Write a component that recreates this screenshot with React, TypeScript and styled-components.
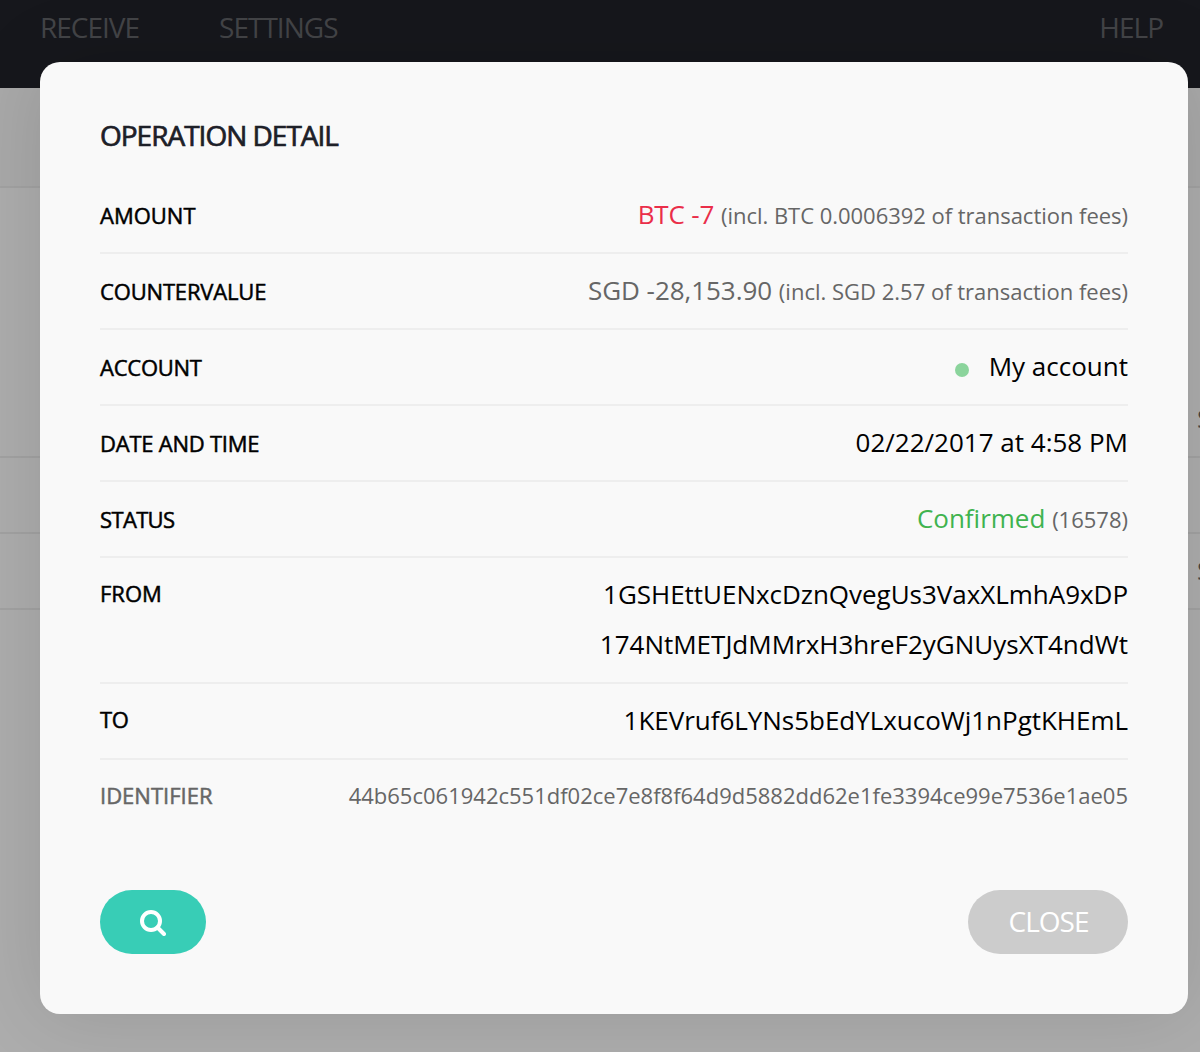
import React from 'react';
import styled, { createGlobalStyle } from 'styled-components';

const GlobalStyle = createGlobalStyle`
  *, *::before, *::after { box-sizing: border-box; }
  html, body, #root { height: 100%; margin: 0; }
  body {
    overflow: hidden;
    font-family: 'Open Sans', 'Noto Sans', sans-serif;
    background: #adadad;
  }
`;

const Page = styled.div`
  position: relative;
  height: 1052px;
  overflow: hidden;
  background: #adadad;
`;

const TopBar = styled.header`
  display: flex;
  height: 88px;
  padding: 8px 37px 0 40px;
  background: #16171c;
`;

const NavItem = styled.span<{ $end?: boolean }>`
  margin-left: ${(p) => (p.$end ? 'auto' : '0')};
  margin-right: ${(p) => (p.$end ? '0' : '80px')};
  font-size: 28px;
  line-height: 38px;
  letter-spacing: -1px;
  color: #434447;
`;

const SubBar = styled.div`
  height: 100px;
  background: #a9a9a9;
  border-bottom: 2px solid #a2a2a2;
`;

const BackRow = styled.div<{ $height: number }>`
  display: flex;
  align-items: flex-end;
  height: ${(p) => p.$height}px;
  padding: 0 0 20px 1197px;
  border-bottom: 2px solid #a2a2a2;
  font-size: 26px;
  line-height: 36px;
  white-space: nowrap;
  color: #454545;
`;

const Dialog = styled.section`
  position: absolute;
  top: 62px;
  left: 40px;
  display: flex;
  flex-direction: column;
  width: 1148px;
  height: 952px;
  padding: 53px 60px 60px;
  border-radius: 20px;
  background: #f9f9f9;
  box-shadow: 0 0 80px rgba(0, 0, 0, 0.12);
`;

const Title = styled.h1`
  margin: 0 0 22px;
  font-size: 28px;
  font-weight: 400;
  line-height: 40px;
  letter-spacing: -1px;
  color: #1d2028;
  -webkit-text-stroke: 0.7px #1d2028;
`;

const Details = styled.dl`
  display: flex;
  flex-direction: column;
  margin: 0;
`;

const Row = styled.div<{ $last?: boolean }>`
  display: flex;
  justify-content: space-between;
  padding: ${(p) => (p.$last ? '12px 0 0' : '12px 0')};
  border-bottom: ${(p) => (p.$last ? '0' : '2px solid #eeeeee')};

  &:first-child {
    padding-top: 13px;
  }
`;

const Label = styled.dt<{ $muted?: boolean; $raised?: boolean; $track?: number }>`
  padding-top: ${(p) => (p.$raised ? '0' : '2px')};
  margin-top: -1px;
  font-size: 22px;
  line-height: 48px;
  letter-spacing: ${(p) => p.$track ?? 0}px;
  color: ${(p) => (p.$muted ? '#666666' : '#000000')};
  -webkit-text-stroke: 0.5px currentColor;
`;

const Values = styled.dd`
  margin: -1px 0 1px;
  text-align: right;
`;

const Line = styled.div`
  height: 50px;
  font-size: 26px;
  line-height: 50px;
  white-space: nowrap;
`;

const Value = styled.span<{ $color?: string; $track?: number }>`
  letter-spacing: ${(p) => p.$track ?? 0}px;
  color: ${(p) => p.$color ?? '#000000'};
`;

const Note = styled.span<{ $track?: number }>`
  font-size: 22px;
  letter-spacing: ${(p) => p.$track ?? 0}px;
  color: #666666;
`;

const Identifier = styled(Note)`
  display: block;
  line-height: 48px;
`;

const Dot = styled.i`
  display: inline-block;
  width: 14px;
  height: 14px;
  margin-right: 20px;
  border-radius: 50%;
  background: #8bd49c;
  vertical-align: -1px;
`;

const Actions = styled.footer`
  display: flex;
  justify-content: space-between;
  margin-top: auto;
`;

const Button = styled.button<{ $primary?: boolean }>`
  display: flex;
  align-items: center;
  justify-content: center;
  width: ${(p) => (p.$primary ? 106 : 160)}px;
  height: 64px;
  padding: ${(p) => (p.$primary ? '2px 0 0' : '0 0 2px 1px')};
  border: 0;
  border-radius: 32px;
  background: ${(p) => (p.$primary ? '#38cdb6' : '#cccccc')};
  color: #ffffff;
  font: 400 28px/38px 'Open Sans', 'Noto Sans', sans-serif;
  letter-spacing: -1px;
`;

const SearchIcon = () => (
  <svg width="26" height="26" viewBox="0 0 26 26" fill="none" stroke="#fff" strokeWidth="4">
    <circle cx="11" cy="11" r="9" />
    <path d="M17.5 17.5L24 24" strokeLinecap="round" />
  </svg>
);

export default function App() {
  return (
    <>
      <GlobalStyle />
      <Page>
        <TopBar>
          <NavItem>RECEIVE</NavItem>
          <NavItem>SETTINGS</NavItem>
          <NavItem $end>HELP</NavItem>
        </TopBar>
        <SubBar />
        <BackRow $height={270}>SGD</BackRow>
        <BackRow $height={76} />
        <BackRow $height={76}>SGD</BackRow>
        <Dialog role="dialog" aria-label="Operation detail">
          <Title>OPERATION DETAIL</Title>
          <Details>
            <Row>
              <Label>AMOUNT</Label>
              <Values>
                <Line>
                  <Value $color="#ea2e49" $track={-0.15}>BTC -7</Value>{' '}
                  <Note $track={-0.03}>(incl. BTC 0.0006392 of transaction fees)</Note>
                </Line>
              </Values>
            </Row>
            <Row>
              <Label $track={-0.17}>COUNTERVALUE</Label>
              <Values>
                <Line>
                  <Value $color="#666666" $track={-0.05}>SGD -28,153.90</Value>{' '}
                  <Note>(incl. SGD 2.57 of transaction fees)</Note>
                </Line>
              </Values>
            </Row>
            <Row>
              <Label $track={-0.25}>ACCOUNT</Label>
              <Values>
                <Line>
                  <Dot />
                  <Value>My account</Value>
                </Line>
              </Values>
            </Row>
            <Row>
              <Label $track={-0.24}>DATE AND TIME</Label>
              <Values>
                <Line>
                  <Value>02/22/2017 at 4:58 PM</Value>
                </Line>
              </Values>
            </Row>
            <Row>
              <Label $track={-0.65}>STATUS</Label>
              <Values>
                <Line>
                  <Value $color="#3fb34f">Confirmed</Value> <Note>(16578)</Note>
                </Line>
              </Values>
            </Row>
            <Row>
              <Label $raised>FROM</Label>
              <Values>
                <Line>
                  <Value $track={-0.03}>1GSHEttUENxcDznQvegUs3VaxXLmhA9xDP</Value>
                </Line>
                <Line>
                  <Value>174NtMETJdMMrxH3hreF2yGNUysXT4ndWt</Value>
                </Line>
              </Values>
            </Row>
            <Row>
              <Label $raised $track={-0.3}>TO</Label>
              <Values>
                <Line>
                  <Value $track={-0.03}>1KEVruf6LYNs5bEdYLxucoWj1nPgtKHEmL</Value>
                </Line>
              </Values>
            </Row>
            <Row $last>
              <Label $muted $raised>IDENTIFIER</Label>
              <Values>
                <Identifier>44b65c061942c551df02ce7e8f8f64d9d5882dd62e1fe3394ce99e7536e1ae05</Identifier>
              </Values>
            </Row>
          </Details>
          <Actions>
            <Button $primary aria-label="Search">
              <SearchIcon />
            </Button>
            <Button>CLOSE</Button>
          </Actions>
        </Dialog>
      </Page>
    </>
  );
}
